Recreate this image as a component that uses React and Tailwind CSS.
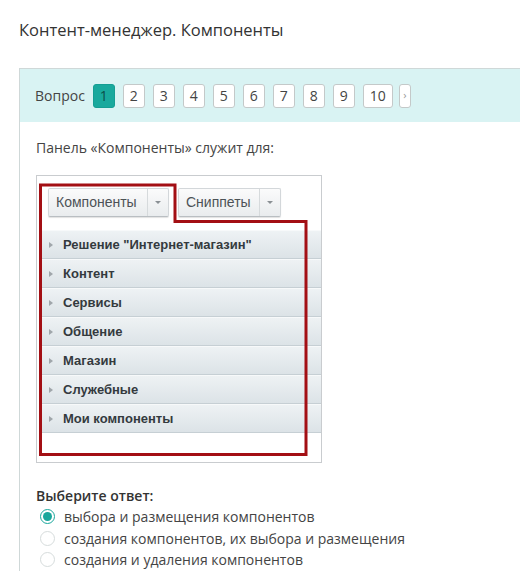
const pages = ["1", "2", "3", "4", "5", "6", "7", "8", "9", "10"];

const groups = [
  'Решение "Интернет-магазин"',
  "Контент",
  "Сервисы",
  "Общение",
  "Магазин",
  "Служебные",
  "Мои компоненты",
];

const answers = [
  "выбора и размещения компонентов",
  "создания компонентов, их выбора и размещения",
  "создания и удаления компонентов",
];

function SplitButton({ label, width }) {
  return (
    <div
      className={`flex h-[29px] ${width} rounded-[2px] border border-[#d3d7da] border-b-[#b9bec2] bg-gradient-to-b from-[#fbfbfb] to-[#e9ecee] shadow-[0_1px_1px_rgba(0,0,0,0.12)]`}
    >
      <div className="flex flex-1 items-center pl-[7px] text-[14px] text-[#4c5256]">{label}</div>
      <div className="flex w-[21px] items-center justify-center border-l border-[#d6dadc]">
        <span className="h-0 w-0 border-x-[3px] border-t-[3px] border-x-transparent border-t-[#8a9094]" />
      </div>
    </div>
  );
}

function ComponentsPanel() {
  return (
    <div className="relative mt-[17px] h-[288px] w-[286px] border border-[#c9cccf] bg-white font-['Liberation_Sans',Arial,sans-serif]">
      <div className="flex gap-[9px] pl-[11px] pt-[12px]">
        <SplitButton label="Компоненты" width="w-[121px]" />
        <SplitButton label="Сниппеты" width="w-[103px]" />
      </div>
      <div className="ml-[4px] mt-[13px]">
        {groups.map((g) => (
          <div
            key={g}
            className="flex h-[29px] items-center border-b border-[#c6cfd4] border-t border-t-[#f7f9fa] bg-gradient-to-b from-[#eef2f4] to-[#dce3e7] pl-[8px]"
          >
            <span className="mr-[10px] h-0 w-0 border-y-[3.5px] border-l-[4px] border-y-transparent border-l-[#a0a6aa]" />
            <span className="text-[13px] font-bold text-[#343a3e]">{g}</span>
          </div>
        ))}
      </div>
      <svg className="pointer-events-none absolute left-0 top-0" width="286" height="288">
        <polygon
          points="3.5,9 138,9 138,45.5 269,45.5 269,278.5 3.5,278.5"
          fill="none"
          stroke="#a30f14"
          strokeWidth="3"
        />
      </svg>
    </div>
  );
}

function App() {
  return (
    <div className="h-[588px] w-[520px] overflow-hidden bg-white font-['Open_Sans',sans-serif] text-[#333]">
      <h1 className="pl-[19px] pt-[18px] text-[16.5px] leading-[24px] text-[#333]">
        Контент-менеджер. Компоненты
      </h1>
      <div className="ml-[19px] mt-[26px] w-[540px] border-l border-t border-[#cfd8d8]">
        <div className="flex h-[53px] items-center gap-[8px] bg-[#d9f3f3] pl-[15px]">
          <span className="text-[14px] text-[#444]">Вопрос</span>
          {pages.map((p) => (
            <div
              key={p}
              className={`flex h-[24px] items-center justify-center rounded-[3px] border text-[14px] ${
                p === "10" ? "w-[30px]" : "w-[22px]"
              } ${
                p === "1"
                  ? "border-[#159e93] bg-[#19a99d] text-[#0b4f4a]"
                  : "border-[#c4c9c9] bg-white text-[#444]"
              }`}
            >
              {p}
            </div>
          ))}
          <div className="-ml-[2px] flex h-[24px] w-[12px] items-center justify-center rounded-[3px] border border-[#c4c9c9] bg-white text-[11px] text-[#999]">
            ›
          </div>
        </div>
        <div className="pl-[16px] pt-[16px]">
          <p className="text-[14px] leading-[20px] text-[#444]">Панель «Компоненты» служит для:</p>
          <ComponentsPanel />
          <p className="mt-[23px] text-[14px] font-semibold leading-[20px] text-[#333]">Выберите ответ:</p>
          <div>
            {answers.map((a, i) => (
              <label key={a} className="flex h-[21.5px] items-center">
                <span
                  className={`ml-[4px] mr-[9px] flex h-[15px] w-[15px] items-center justify-center rounded-full border ${
                    i === 0 ? "border-[#1aa79c] bg-white" : "border-[#d6dcdc] bg-white"
                  }`}
                >
                  {i === 0 && <span className="h-[9px] w-[9px] rounded-full bg-[#1aa79c]" />}
                </span>
                <span className="text-[14px] text-[#444]">{a}</span>
              </label>
            ))}
          </div>
        </div>
      </div>
    </div>
  );
}

export default App;
